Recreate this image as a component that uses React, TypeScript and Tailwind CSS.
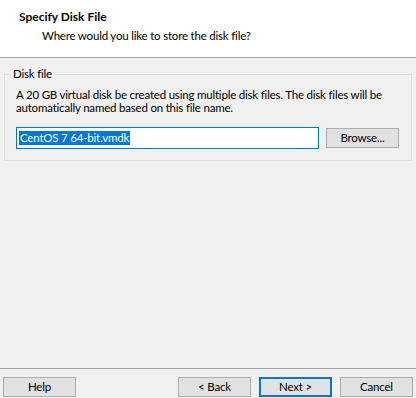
import React from 'react';

const font = "font-['Lato','Segoe_UI','Noto_Sans',sans-serif]";
const txt = 'text-[11.5px] tracking-[-0.2px]';

function WinButton({ label, primary = false, className = '' }: { label: string; primary?: boolean; className?: string }) {
  return (
    <button
      className={`h-[20px] w-[73px] shrink-0 bg-[#e1e1e1] ${txt} leading-none text-black ${
        primary ? 'border-2 border-[#0078d7]' : 'border border-[#adadad]'
      } ${className}`}
    >
      {label}
    </button>
  );
}

export default function App() {
  return (
    <div className={`w-[416px] h-[398px] bg-[#f0f0f0] flex flex-col text-black ${font}`}>
      {/* Wizard header */}
      <div className="h-[58px] shrink-0 bg-white border-b border-[#a0a0a0] pt-[9px]">
        <div className="pl-[19px] text-[12px] leading-[16px] font-bold">Specify Disk File</div>
        <div className={`pl-[42px] mt-[3px] ${txt} leading-[16px]`}>
          Where would you like to store the disk file?
        </div>
      </div>

      {/* Body */}
      <div className="flex-1 min-h-0 pt-[8px]">
        <fieldset className="mx-[4px] border border-[#dcdcdc] pl-[11px] pr-[11px] pb-[11px]">
          <legend className={`ml-[-6px] px-[3px] ${txt} leading-[16px]`}>Disk file</legend>
          <p className={`${txt} leading-[13px] mt-[6px]`}>
            A 20 GB virtual disk be created using multiple disk files. The disk files will be
            automatically named based on this file name.
          </p>
          <div className="flex items-center mt-[13px]">
            <div className="w-[303px] h-[22px] border border-[#0078d7] bg-white flex items-center pl-[2px]">
              <span className={`bg-[#0078d7] text-white ${txt} leading-[14px] px-px`}>
                CentOS 7 64-bit.vmdk
              </span>
            </div>
            <WinButton label="Browse..." className="ml-[7px]" />
          </div>
        </fieldset>
      </div>

      {/* Footer */}
      <div className="h-[30px] shrink-0 border-t border-[#a0a0a0] flex items-start pt-[8px] px-[3px]">
        <WinButton label="Help" />
        <div className="flex-1" />
        <WinButton label="< Back" />
        <WinButton label="Next >" primary className="ml-[8px]" />
        <WinButton label="Cancel" className="ml-[8px]" />
      </div>
    </div>
  );
}
